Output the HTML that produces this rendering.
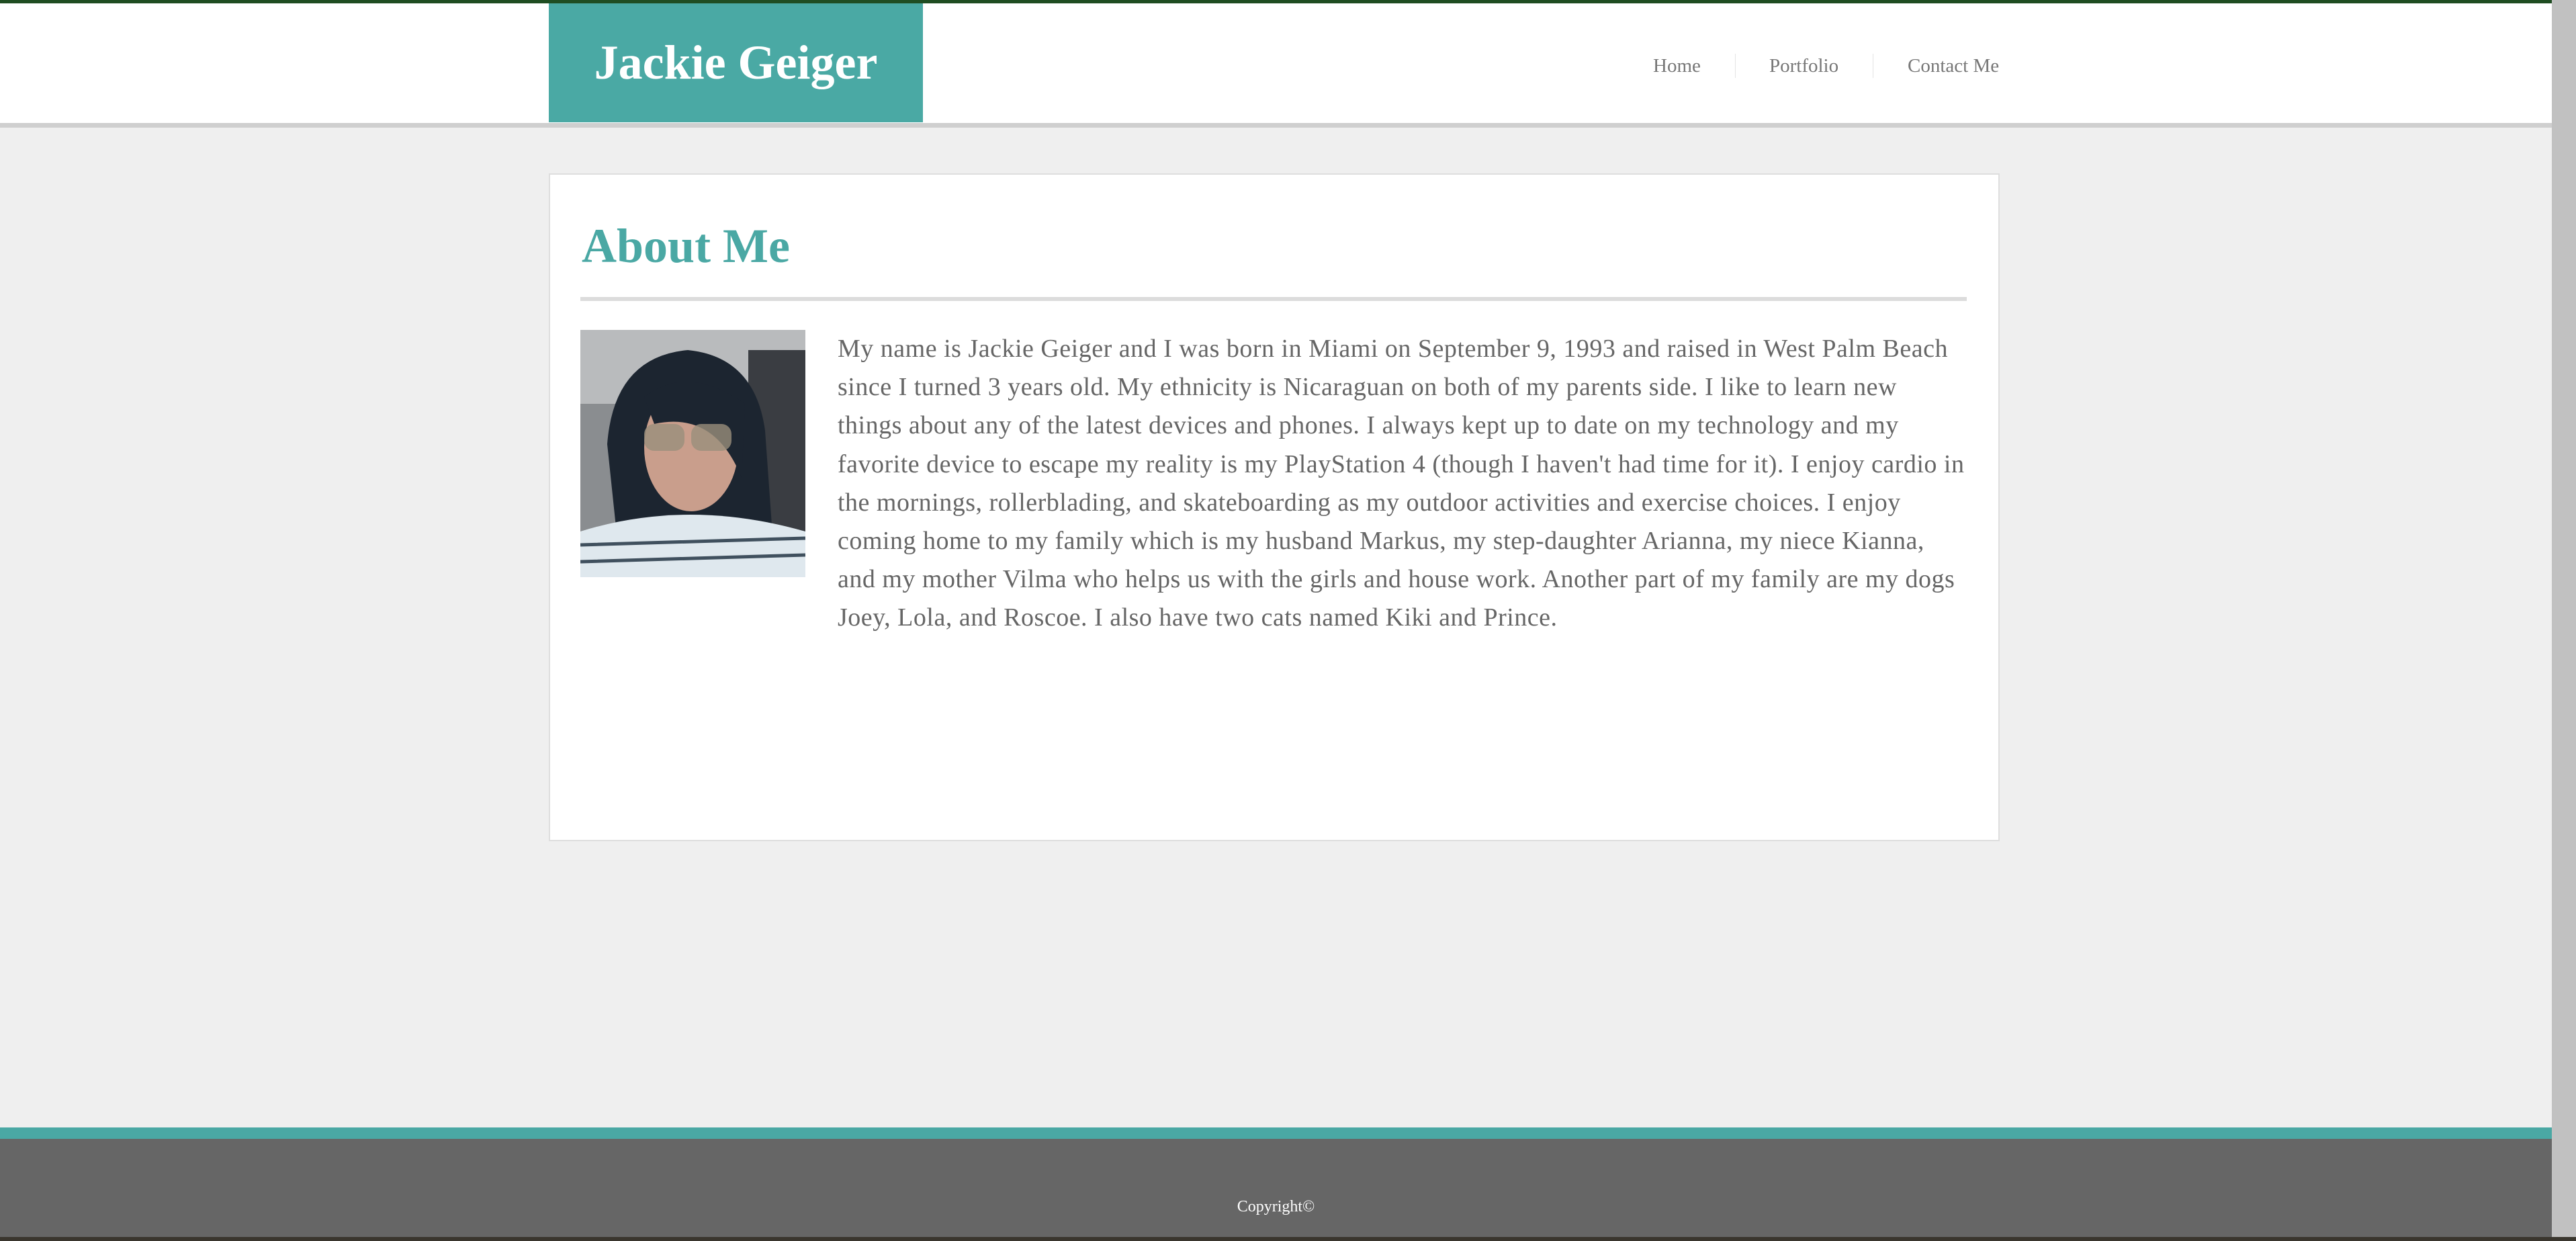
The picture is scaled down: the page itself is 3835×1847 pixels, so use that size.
<!DOCTYPE html>
<html><head><meta charset="utf-8"><style>
html,body{margin:0;padding:0}
body{width:3835px;height:1847px;position:relative;overflow:hidden;background:#efefef;font-family:"Liberation Serif",serif}
.top{position:absolute;left:0;top:0;width:3799px;height:5px;background:#1f4d22}
.hdr{position:absolute;left:0;top:5px;width:3799px;height:178px;background:#fff}
.hdrb{position:absolute;left:0;top:183px;width:3799px;height:7px;background:#cfcfcf}
.logo{position:absolute;left:817px;top:5px;width:557px;height:177px;background:#4aa9a4;color:#fff;font-weight:bold;font-size:72px;text-align:center;line-height:177px}
.nav{position:absolute;top:78px;font-size:29px;color:#777;line-height:40px}
.sep{position:absolute;top:80px;width:1px;height:36px;background:#e4e4e4}
.box{position:absolute;left:817px;top:258px;width:2156px;height:990px;background:#fff;border:2px solid #dedede}
h1{position:absolute;left:866px;top:321px;margin:0;font-size:72px;color:#4aa8a4;font-weight:bold;line-height:90px}
.hr{position:absolute;left:864px;top:442px;width:2064px;height:6px;background:#dcdcdc}
.photo{position:absolute;left:864px;top:491px;width:335px;height:368px}
.txt{position:absolute;left:1247px;top:491px;width:1700px;font-size:38px;letter-spacing:0.5px;line-height:57.2px;color:#666;white-space:nowrap}
.teal{position:absolute;left:0;top:1678px;width:3799px;height:17px;background:#4aa8a4}
.foot{position:absolute;left:0;top:1695px;width:3799px;height:146px;background:#666}
.copy{position:absolute;left:0;width:3799px;top:1783px;text-align:center;color:#fff;font-size:24px}
.bot{position:absolute;left:0;top:1841px;width:3835px;height:6px;background:#3a362e}
.sb{position:absolute;left:3799px;top:0;width:36px;height:1841px;background:#c1c1c1}
</style></head><body>
<div class="top"></div>
<div class="hdr"></div>
<div class="hdrb"></div>
<div class="logo">Jackie Geiger</div>
<div class="nav" style="left:2461px">Home</div>
<div class="sep" style="left:2583px"></div>
<div class="nav" style="left:2634px">Portfolio</div>
<div class="sep" style="left:2788px"></div>
<div class="nav" style="left:2840px">Contact Me</div>
<div class="box"></div>
<h1>About Me</h1>
<div class="hr"></div>
<svg class="photo" viewBox="0 0 335 368" preserveAspectRatio="none">
<rect width="335" height="368" fill="#8a8d90"/>
<rect x="0" y="0" width="335" height="110" fill="#b9bbbd"/>
<rect x="250" y="30" width="85" height="300" fill="#3a3d42"/>
<path d="M60 360 L40 170 Q50 40 160 30 Q260 40 275 150 L290 360 Z" fill="#1c2530"/>
<ellipse cx="165" cy="175" rx="70" ry="95" fill="#c99e8c"/>
<path d="M95 100 Q160 50 245 110 L240 220 Q200 120 110 140 Z" fill="#1c2530"/>
<rect x="95" y="140" width="60" height="40" rx="15" fill="#9a8e7c" opacity=".8"/>
<rect x="165" y="140" width="60" height="40" rx="15" fill="#9a8e7c" opacity=".8"/>
<path d="M0 300 Q160 250 335 300 L335 368 L0 368 Z" fill="#dfe8ee"/>
<path d="M0 320 L335 310 M0 345 L335 335" stroke="#40505e" stroke-width="5"/>
</svg>
<div class="txt">My name is Jackie Geiger and I was born in Miami on September 9, 1993 and raised in West Palm Beach<br>since I turned 3 years old. My ethnicity is Nicaraguan on both of my parents side. I like to learn new<br>things about any of the latest devices and phones. I always kept up to date on my technology and my<br>favorite device to escape my reality is my PlayStation 4 (though I haven't had time for it). I enjoy cardio in<br>the mornings, rollerblading, and skateboarding as my outdoor activities and exercise choices. I enjoy<br>coming home to my family which is my husband Markus, my step-daughter Arianna, my niece Kianna,<br>and my mother Vilma who helps us with the girls and house work. Another part of my family are my dogs<br>Joey, Lola, and Roscoe. I also have two cats named Kiki and Prince.</div>
<div class="teal"></div>
<div class="foot"></div>
<div class="copy">Copyright©</div>
<div class="bot"></div>
<div class="sb"></div>
</body></html>
